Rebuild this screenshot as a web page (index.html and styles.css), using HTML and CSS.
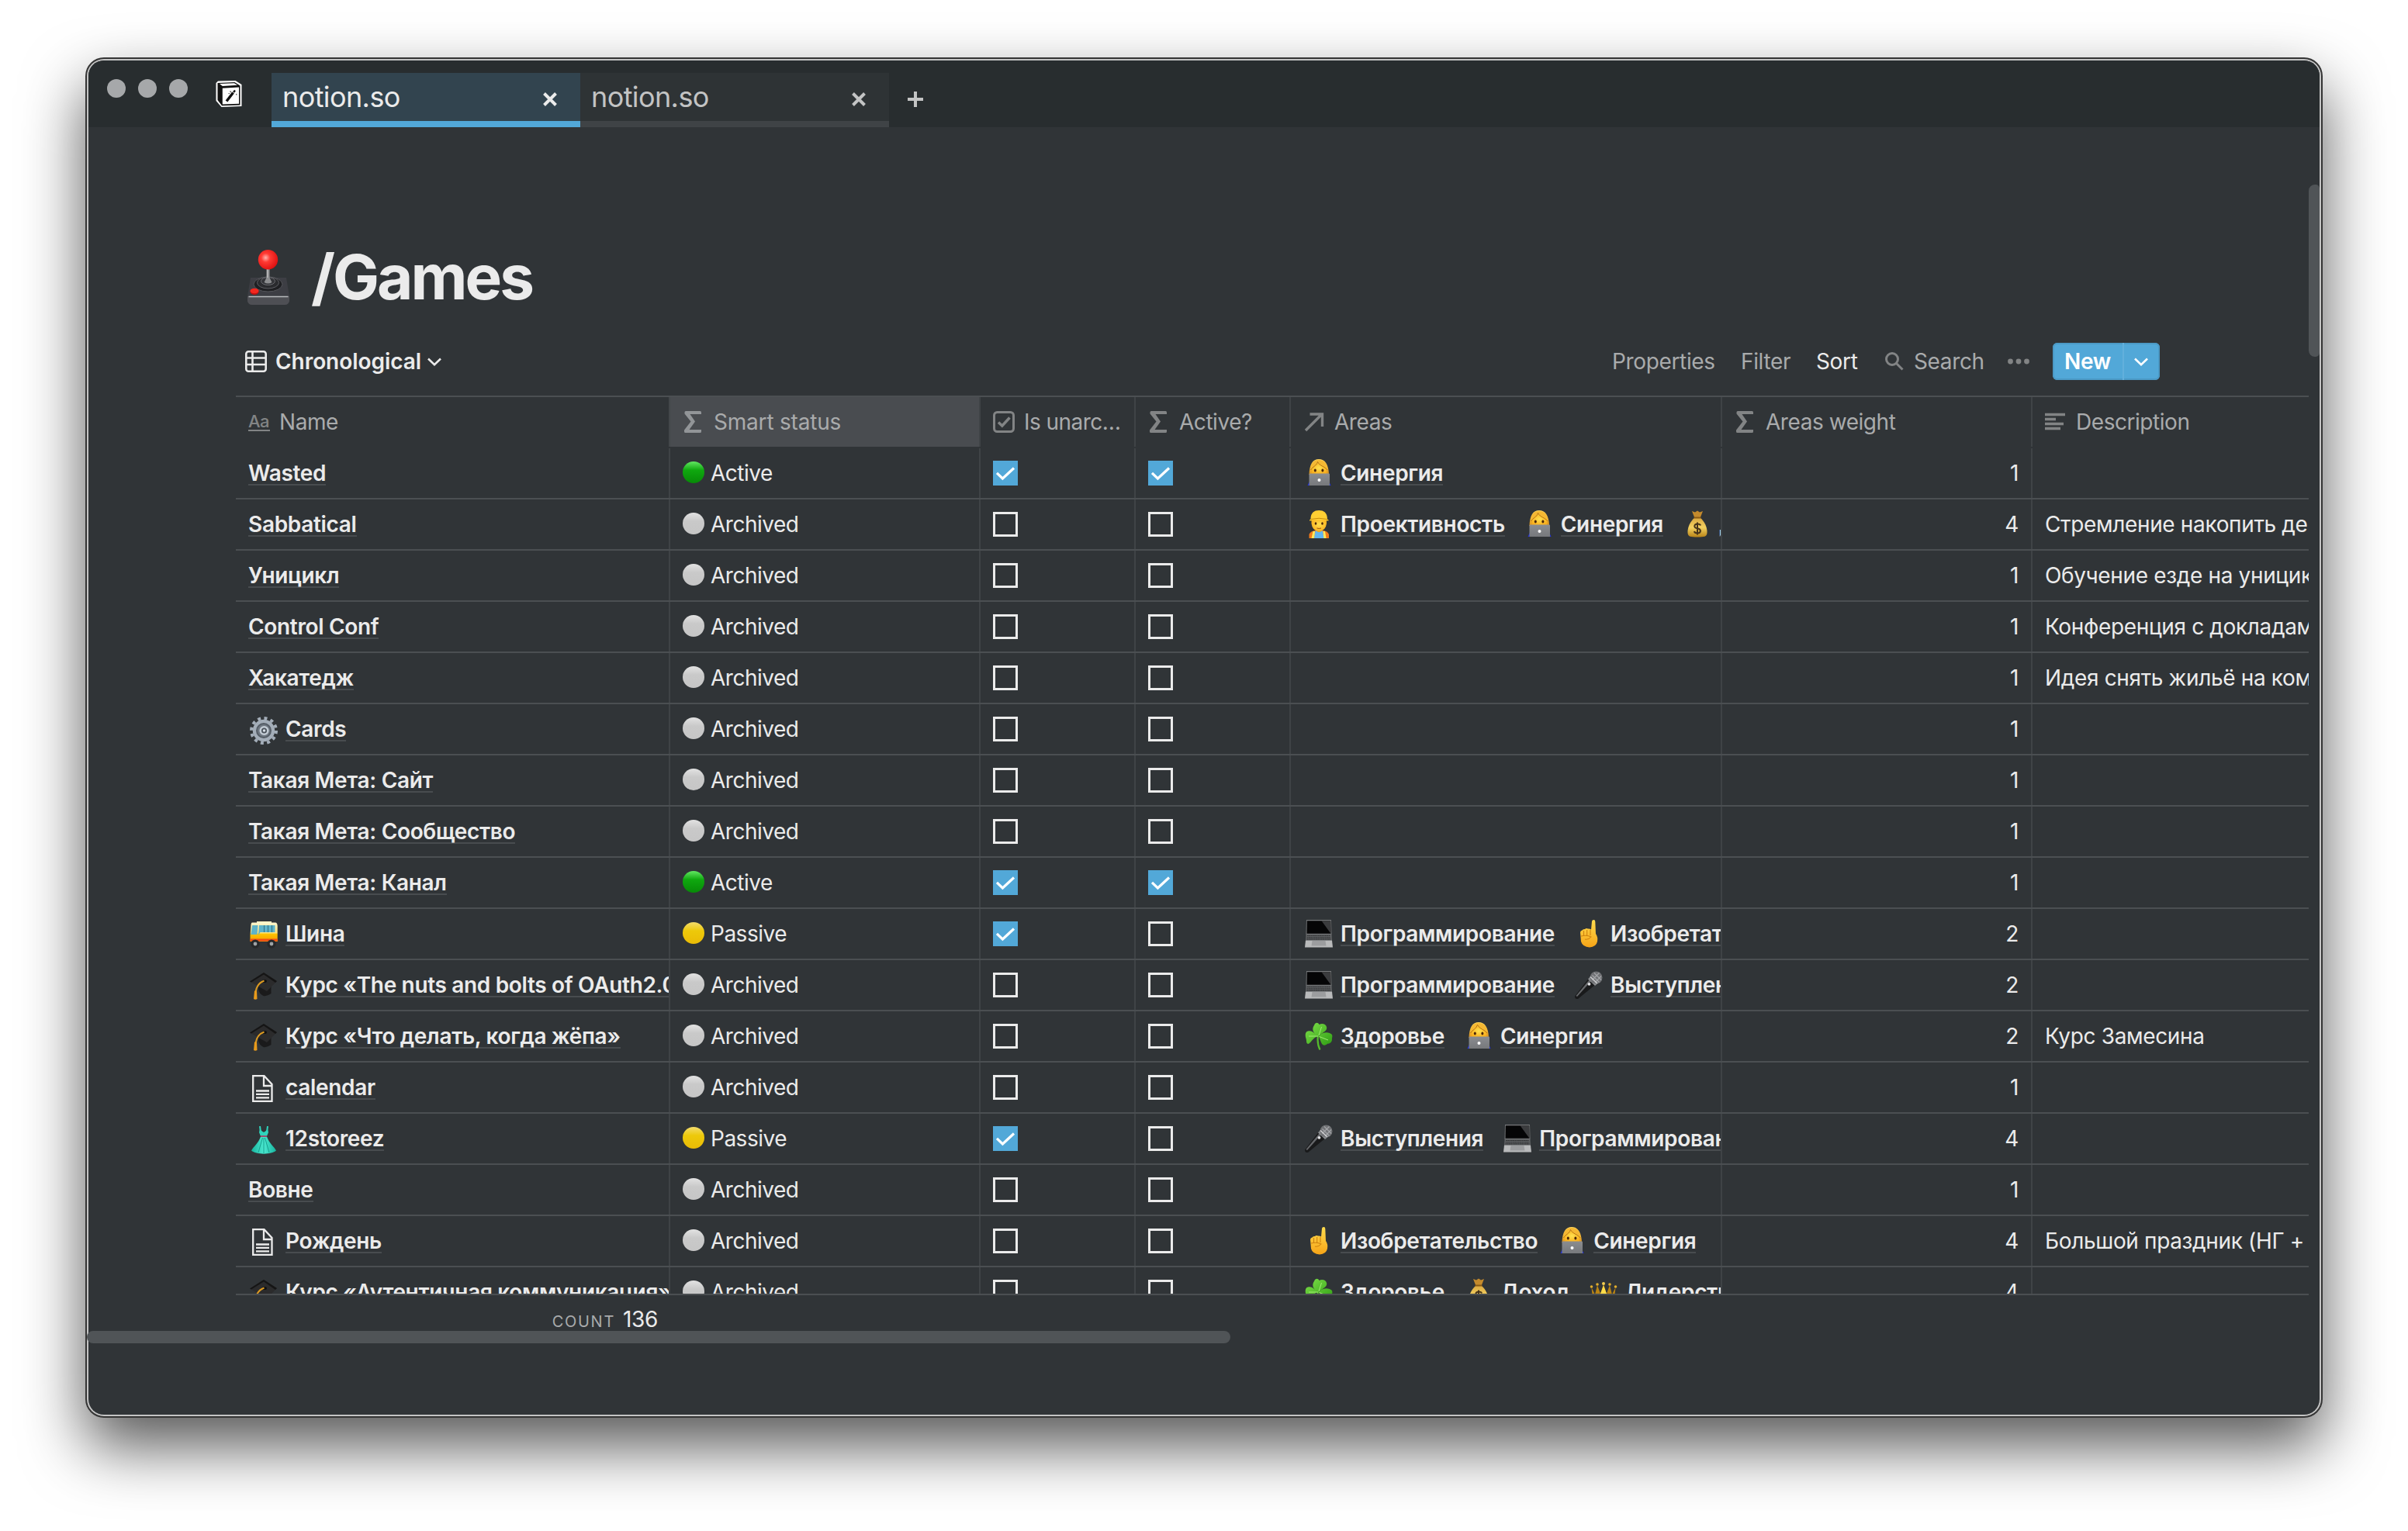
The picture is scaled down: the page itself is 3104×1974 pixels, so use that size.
FILE: index.html
```html
<!DOCTYPE html>
<html lang="ru">
<head>
<meta charset="utf-8">
<title>/Games</title>
<link rel="stylesheet" href="styles.css">
</head>
<body>
<svg class="defs" aria-hidden="true">
  <defs>
    <linearGradient id="g-hair" x1="0" y1="0" x2="0" y2="1"><stop offset="0" stop-color="#ffd65c"/><stop offset="1" stop-color="#d98a12"/></linearGradient>
    <linearGradient id="g-grey" x1="0" y1="0" x2="0" y2="1"><stop offset="0" stop-color="#8a8c90"/><stop offset="1" stop-color="#77797c"/></linearGradient>
    <linearGradient id="g-leaf" x1="0" y1="0" x2="1" y2="1"><stop offset="0" stop-color="#7fe04a"/><stop offset="1" stop-color="#2f9e14"/></linearGradient>
    <linearGradient id="g-skin" x1="0" y1="0" x2="0" y2="1"><stop offset="0" stop-color="#ffdc4e"/><stop offset="1" stop-color="#f6a417"/></linearGradient>
    <linearGradient id="g-bag" x1="0" y1="0" x2="0" y2="1"><stop offset="0" stop-color="#d9a640"/><stop offset=".5" stop-color="#f3d160"/><stop offset="1" stop-color="#b98418"/></linearGradient>
    <linearGradient id="g-bus" x1="0" y1="0" x2="0" y2="1"><stop offset="0" stop-color="#fff6cf"/><stop offset=".55" stop-color="#ffe27a"/><stop offset=".6" stop-color="#ffc400"/><stop offset="1" stop-color="#f59b00"/></linearGradient>
    <linearGradient id="g-dress" x1="0" y1="0" x2="1" y2="0"><stop offset="0" stop-color="#16b39d"/><stop offset=".5" stop-color="#4be8d0"/><stop offset="1" stop-color="#16b39d"/></linearGradient>
    <radialGradient id="g-ball" cx=".38" cy=".4" r=".65"><stop offset="0" stop-color="#ffb3ad"/><stop offset=".35" stop-color="#ff3a33"/><stop offset="1" stop-color="#dd1010"/></radialGradient>
    <radialGradient id="g-face" cx=".5" cy=".4" r=".6"><stop offset="0" stop-color="#ffe04f"/><stop offset="1" stop-color="#f9ad1a"/></radialGradient>
  </defs>
  <symbol id="sigma" viewBox="0 0 22 28"><path d="M2 0H20.500Q22 0 22 1.500V4H7.500L14 13.500 6.500 24H22V26.500Q22 28 20.500 28H1.500Q0 28 0 26.500V24.500L8.500 13.500 .5 3.500V1.500Q.5 0 2 0Z"/></symbol>
  <symbol id="check" viewBox="0 0 32 32"><path d="M0 0H32V32H0Z" fill="#52a8d8"/><path d="M5 15.800 12.400 23 27 9.500" fill="none" stroke="#fff" stroke-width="3.200"/></symbol>
  <symbol id="box" viewBox="0 0 32 32"><path d="M1.500 1.500H30.500V30.500H1.500Z" fill="none" stroke="#ebebeb" stroke-width="3"/></symbol>
  <symbol id="page" viewBox="0 0 36 36"><path d="M4.200 1.200H18.500L28.500 12V33.800H4.200ZM18 1.500V14H28.500M8 20.500H25M8 24.900H25M8 29.300H25" fill="none" stroke="#ebebeb" stroke-width="2.300"/></symbol>
  <symbol id="woman" viewBox="0 0 36 36"><path d="M18 0C10 0 6 7 5.500 19.500L8 23H29L31 19.500C30.500 7 26 0 18 0Z" fill="url(#g-hair)"/><path d="M8.500 12C8.500 7 13 5 18 6 23 5 28 8 28 12V20H8.500Z" fill="url(#g-face)"/><path d="M7 14C10 9.500 15 9 16.500 3.500 19 9 26 9.500 29.500 14 29 5 24 1 18 1 12 1 7.500 5 7 14Z" fill="#f5b833"/><path d="M16.500 3.500C19 9 26 9.500 29 14M16.500 3.500C15 9 10 9.500 7.500 14" stroke="#b06c0d" stroke-width=".9" fill="none"/><ellipse cx="13.300" cy="14.500" rx="1.500" ry="2" fill="#4a2508"/><ellipse cx="22.900" cy="14.500" rx="1.500" ry="2" fill="#4a2508"/><path d="M3.500 34 6 28.500H31L33.500 34Z" fill="#2434e0"/><path d="M5.500 19.500Q5.500 18.500 6.500 18.500H31Q32 18.500 32 19.500V34H5.500Z" fill="url(#g-grey)"/><circle cx="18.500" cy="27" r="2" fill="#fff"/></symbol>
  <symbol id="worker" viewBox="0 0 36 36"><path d="M5.500 36V31Q7 27 13 26H24Q29.500 27 31 31V36Z" fill="#f27a1a"/><path d="M8.500 36 10.500 27H13L12.500 36ZM27.500 36 26 27H23.500L24 36Z" fill="#ffe95a"/><path d="M13.500 26.500H23L24.500 36H12Z" fill="#62b5ef"/><path d="M15 22H21.500V26.500Q18 30 15 26.500Z" fill="#eaa01a"/><path d="M8.500 12H28V17Q27 26 18.200 27.500 9.500 26 8.500 17Z" fill="url(#g-face)"/><ellipse cx="14" cy="17" rx="1.300" ry="1.800" fill="#4a2508"/><ellipse cx="22.500" cy="17" rx="1.300" ry="1.800" fill="#4a2508"/><path d="M15.500 23Q18.200 24 21 23" stroke="#a3540c" fill="none"/><path d="M7.500 11.500C7.500 3 12 0 18.200 0S29 3 29 11.500Q31 12 30.500 13.500 18 11.500 6 13.500 5.500 12 7.500 11.500Z" fill="#ffcf33"/><path d="M7.500 11.500Q18 9 29 11.500" stroke="#c78b0b" fill="none"/></symbol>
  <symbol id="bag" viewBox="0 0 36 36"><path d="M11 1 15 2.500 18 .5 21 2.500 25 1 21.500 10H14.500Z" fill="#c48a2c"/><path d="M14.500 9.500H21.500C27 14 31 22 30.500 29 30 34 27 34.500 18 34.500S6 34 5.500 29C5 22 9 14 14.500 9.500Z" fill="url(#g-bag)"/><path d="M13.500 9.500H22.500" stroke="#8a5a14" stroke-width="2"/><path d="M22 19.500Q21.500 17.500 18 17.500T14.300 20.500Q14.500 23 18 23.300T22 26.500Q21.500 29.500 18 29.500T14 27M18 15.500V31.500" fill="none" stroke="#46331a" stroke-width="2"/></symbol>
  <symbol id="crown" viewBox="0 -3 36 36"><path d="M2.500 9 7 18 10 6 14 17 18 5 22 17 26 6 29 18 33.500 9 31 32H5Z" fill="#b98414"/><path d="M13 20 18 6 23 20 20 31H16Z" fill="#ffdc4a"/><path d="M5 18 7 30M31 18 29 30" stroke="#efc23a" stroke-width="2.500"/><circle cx="2.500" cy="8" r="1.800" fill="#e0ac2c"/><circle cx="10" cy="5" r="1.800" fill="#e0ac2c"/><circle cx="18" cy="4" r="2" fill="#f3cc50"/><circle cx="26" cy="5" r="1.800" fill="#e0ac2c"/><circle cx="33.500" cy="8" r="1.800" fill="#e0ac2c"/></symbol>
  <symbol id="laptop" viewBox="0 0 36 36"><path d="M2 0H34L34.500 19H1.500Z" fill="#77797b"/><path d="M2.800 1.200H33.200L33.500 17.800H2.500Z" fill="#050506"/><path d="M21.500 1.200H33.200L33.500 17.800Z" fill="#3b3c3e"/><path d="M1.500 18.500H34.500L35 26.500H1Z" fill="#5f6163"/><path d="M3 20.500H33M2.700 22.700H33.300M2.500 24.900H33.500" stroke="#2d2e30" stroke-width="1.100" stroke-dasharray="1.800 .5"/><path d="M1 26.500H35L36 35.500H0Z" fill="#b9babb"/><path d="M9.500 27H26.500L27.500 33.500H8.500Z" fill="#9c9d9f"/></symbol>
  <symbol id="finger" viewBox="0 0 36 36"><path d="M22 2Q22.300 0 24.300 0T26.300 2.300L27 18Q30 22 29 28 27.500 35 19 35.500 10 35 8 28L7 16Q7.500 13.500 9.500 13.500 10.500 11.500 13 12 14.500 10.500 17 11.500 19 11 21 12.500Z" fill="url(#g-skin)"/><path d="M11.500 14V20M15.700 13V20M20 13V20M8 21Q16 19 21 22 17.500 26 13 25" stroke="#cf8310" stroke-width="1.100" fill="none"/></symbol>
  <symbol id="mic" viewBox="0 0 36 36"><path d="M0 32.500 17.500 10 26 18 4 36Q0 36.500 0 32.500Z" fill="#191a1b"/><path d="M1.500 32 18.500 11.500 20.500 13.500 3 33Z" fill="#66686b"/><path d="M17 10.500 21.500 5 31.500 14 26 19Z" fill="#8b8d90"/><circle cx="27.500" cy="8.500" r="8" fill="#707275"/><path d="M22.500 5.500 31.500 14.500M25 2.500 34 11.500M22.500 11.500 31.500 2.500M26 15 34 6.500" stroke="#a5a7aa" stroke-width="1.100"/><path d="M20 7.500 29 16" stroke="#cfd0d2" stroke-width="1.400"/><circle cx="18.500" cy="16.800" r="1.900" fill="#e3e4e6"/></symbol>
  <symbol id="clover" viewBox="0 0 36 36"><path d="M17 17Q15.500 28 19.500 35.500" stroke="#55bb2c" stroke-width="2.200" fill="none"/><path d="M17.500 18C8 13 10 7 12 4 13.500 0 17 0 18.500 3 22 1 27 2 28 6 29.500 11 23 13 17.500 18ZM17 18C9 20 7 30 3 27.500 1.500 26 2.500 24 1.500 21 0 17 .5 12 4 11.500 9 10 12 14 17 18ZM18 18C24 11 32 13 34.500 15.500 36.500 18 34.500 20 35 22.500 35 26 31 28.500 29.500 27.500 26 31 22.500 30 21 26Z" fill="url(#g-leaf)"/><path d="M18 17 21.500 6M17 18 5 18M18.500 18.500 30 23" stroke="#a9f27c" stroke-width=".9"/></symbol>
  <symbol id="gear" viewBox="0 0 36 36"><circle cx="18" cy="18" r="16" fill="none" stroke="#a3adb8" stroke-width="4" stroke-dasharray="4 4.378"/><circle cx="18" cy="18" r="11.700" fill="#6f7882" stroke="#a3adb8" stroke-width="5"/><circle cx="18" cy="18" r="9" fill="none" stroke="#555d66" stroke-width="2"/><circle cx="18.500" cy="18" r="4.800" fill="#4a525b" stroke="#c3ccd5" stroke-width="2.600"/><circle cx="18.500" cy="18" r="1.800" fill="#d5dde5"/></symbol>
  <symbol id="bus" viewBox="0 0 36 36"><path d="M9 0H28V2.500H9Z" fill="#fff3c4"/><path d="M3 1.500H33Q35.500 1.500 35.700 6V26H.5V18L1.500 5Q1.700 1.500 3 1.500Z" fill="url(#g-bus)"/><path d="M.5 22.500H35.700V25.500H.5Z" fill="#f04e16"/><path d="M3.200 5H10.500L9.500 17H1.300Z" fill="#5fb3c9"/><path d="M12 5H32.500V14H13.500L11 18Z" fill="#5fb3c9"/><path d="M18.500 5V14M23.500 5V14M28.500 5V14" stroke="#2f6f80"/><circle cx="7" cy="29" r="5.600" fill="#26282a"/><circle cx="28" cy="29" r="5.600" fill="#26282a"/><circle cx="7" cy="29" r="2.400" fill="#9fa3a6"/><circle cx="28" cy="29" r="2.400" fill="#9fa3a6"/></symbol>
  <symbol id="cap" viewBox="0 0 36 36"><path d="M11 13 27.500 15V27Q22 31 17.500 30 12 27 11 22Z" fill="#1a1a1b"/><path d="M18 0 35 11 22 24 0 11.500Z" fill="#2b2b2c"/><path d="M18 0 35 11 33 13 18 2.500 2 12.500 0 11.500Z" fill="#151515"/><ellipse cx="19" cy="11" rx="3" ry="2" fill="#111"/><path d="M18.500 10.500Q9 14 7.500 25" stroke="#dc9a22" stroke-width="2" fill="none"/><path d="M6 23.500H9L9.500 34Q7 35.500 5 34Z" fill="#e79a1c"/></symbol>
  <symbol id="dress" viewBox="0 0 36 36"><path d="M13 0 14 7.500 18 9 22 7.500 23 0" fill="none" stroke="#2fd3bc" stroke-width="2"/><path d="M13 4 18 8.500 23 4 24 8 22 13H14L12 8Z" fill="#2fd3bc"/><path d="M14 13.500H22C25 22 31 26 34 31.500 28 37 8 37 2 31.500 5 26 11 22 14 13.500Z" fill="url(#g-dress)"/><path d="M14 13H22" stroke="#a3456a" stroke-width="1.800"/><path d="M16.500 15 11 34M18 15V35.500M19.500 15 25 34" stroke="#139a88" stroke-width=".9"/></symbol>
</svg>

<div class="window">
  <header class="titlebar">
    <div class="lights"><i></i><i></i><i></i></div>
    <svg class="logo" viewBox="0 0 34 34"><path d="M3 .5 25.500 0 33.500 5V33L7.500 34 .5 26V3Z" fill="#fff"/><path d="M2.500 3 24.500 2 31.500 6.500V31.500L8 32.300 2.500 25Z" fill="#111"/><path d="M5 4 24 3.200 28 5.800 8.800 7Z" fill="#fff"/><path d="M8.800 9.800 30 8.600V29.800L8.800 30.600Z" fill="#fff"/><path d="M14 26.500 22.500 15.500" stroke="#111" stroke-width="3.400"/><path d="M23 15 25 12.500" stroke="#111" stroke-width="2.400"/><path d="M18.500 13.500 20 15M26.500 17 27 18.500M16.500 16.500H18" stroke="#555" stroke-width="1.200"/></svg>
    <nav class="tabs">
      <div class="tab active"><span>notion.so</span><svg viewBox="0 0 20 20"><path d="M2.500 2.500 17.500 17.500M17.500 2.500 2.500 17.500"/></svg></div>
      <div class="tab"><span>notion.so</span><svg viewBox="0 0 20 20"><path d="M2.500 2.500 17.500 17.500M17.500 2.500 2.500 17.500"/></svg></div>
    </nav>
    <svg class="plus" viewBox="0 0 20 20"><path d="M10 0V20M0 10H20"/></svg>
  </header>

  <main class="page">
    <h1 class="title">
      <svg class="joystick" viewBox="0 0 54 71"><path d="M4 36H50L54 60V66Q53 71 48 71H6Q1 71 0 66V60Z" fill="#3d3e44"/><path d="M0 60H54V66Q53 71 48 71H6Q1 71 0 66Z" fill="#4e4f54"/><path d="M1.500 60.500H52.500" stroke="#b9babd" stroke-width="1.600"/><ellipse cx="26.500" cy="44.500" rx="18.500" ry="9.500" fill="#1f2023" stroke="#55565b"/><ellipse cx="26.500" cy="42.500" rx="14" ry="7.500" fill="#2a2b2e" stroke="#5d5e63"/><ellipse cx="26.500" cy="40.500" rx="9" ry="5" fill="#333438" stroke="#6a6b70"/><path d="M24.500 23H28.500V36L31.500 42Q26.500 45 21.500 42L24.500 36Z" fill="#8d8e90"/><path d="M25.800 23V36" stroke="#d0d0d0"/><ellipse cx="9" cy="54" rx="5.500" ry="4" fill="#c41010"/><ellipse cx="9" cy="53" rx="5.500" ry="3.200" fill="#f4281f"/><circle cx="26.500" cy="12.800" r="12.700" fill="url(#g-ball)"/></svg>
      <span>/Games</span>
    </h1>

    <div class="toolbar">
      <div class="view">
        <svg class="view-icon" viewBox="0 0 28 28"><rect x="1.300" y="1.300" width="25.400" height="25.400" rx="3"/><path d="M1 9.500H27M1 18H27M9.500 1V27"/></svg>
        <span>Chronological</span>
        <svg class="chevron" viewBox="0 0 18 10"><path d="M1 1 9 8.700 17 1"/></svg>
      </div>
      <div class="actions">
        <span>Properties</span><span>Filter</span><span class="on">Sort</span>
        <span class="search"><svg viewBox="0 0 24 24"><circle cx="9" cy="9" r="7.500"/><path d="M14.500 14.500 22.500 22.500"/></svg>Search</span>
        <svg class="dots" viewBox="0 0 28 8"><circle cx="3.500" cy="4" r="3.400"/><circle cx="14" cy="4" r="3.400"/><circle cx="24.500" cy="4" r="3.400"/></svg>
        <div class="new"><span>New</span><b><svg class="chevron" viewBox="0 0 18 10"><path d="M1 1 9 8.700 17 1"/></svg></b></div>
      </div>
    </div>

    <section class="table">
      <div class="head row">
        <div><b class="aa">Aa</b>Name</div>
        <div class="hover"><svg class="sig"><use href="#sigma"/></svg>Smart status</div>
        <div><svg class="hicon" viewBox="0 0 28 28"><rect x="1.500" y="1.500" width="25" height="25" rx="4" fill="none" stroke="#828485" stroke-width="3"/><path d="M7 14.500 11.800 19 21.500 8.500" fill="none" stroke="#828485" stroke-width="3.400"/></svg><span class="tight">Is unarc…</span></div>
        <div><svg class="sig"><use href="#sigma"/></svg>Active?</div>
        <div><svg class="hicon" viewBox="0 0 28 28"><path d="M3 25 23.500 4.500M8.500 4H24.500V20" fill="none" stroke="#828485" stroke-width="3.400"/></svg>Areas</div>
        <div><svg class="sig"><use href="#sigma"/></svg>Areas weight</div>
        <div><svg class="hicon" viewBox="0 0 28 28"><path d="M0 4.500H26M0 10.500H14M0 16.500H24M0 22.500H20" stroke="#828485" stroke-width="3.700"/></svg>Description</div>
      </div>
      <div class="body">
        <div class="row"><div><a>Wasted</a></div><div><i class="dot green"></i>Active</div><div><svg class="cb"><use href="#check"/></svg></div><div><svg class="cb"><use href="#check"/></svg></div><div><svg class="em"><use href="#woman"/></svg><a>Синергия</a></div><div>1</div><div></div></div>
        <div class="row"><div><a>Sabbatical</a></div><div><i class="dot"></i>Archived</div><div><svg class="cb"><use href="#box"/></svg></div><div><svg class="cb"><use href="#box"/></svg></div><div><svg class="em"><use href="#worker"/></svg><a>Проективность</a><svg class="em"><use href="#woman"/></svg><a>Синергия</a><svg class="em"><use href="#bag"/></svg><a>Доход</a></div><div>4</div><div>Стремление накопить деньги</div></div>
        <div class="row"><div><a>Уницикл</a></div><div><i class="dot"></i>Archived</div><div><svg class="cb"><use href="#box"/></svg></div><div><svg class="cb"><use href="#box"/></svg></div><div></div><div>1</div><div>Обучение езде на уницикле</div></div>
        <div class="row"><div><a>Control Conf</a></div><div><i class="dot"></i>Archived</div><div><svg class="cb"><use href="#box"/></svg></div><div><svg class="cb"><use href="#box"/></svg></div><div></div><div>1</div><div>Конференция с докладами</div></div>
        <div class="row"><div><a>Хакатедж</a></div><div><i class="dot"></i>Archived</div><div><svg class="cb"><use href="#box"/></svg></div><div><svg class="cb"><use href="#box"/></svg></div><div></div><div>1</div><div>Идея снять жильё на компанию</div></div>
        <div class="row"><div><svg class="em"><use href="#gear"/></svg><a>Cards</a></div><div><i class="dot"></i>Archived</div><div><svg class="cb"><use href="#box"/></svg></div><div><svg class="cb"><use href="#box"/></svg></div><div></div><div>1</div><div></div></div>
        <div class="row"><div><a>Такая Мета: Сайт</a></div><div><i class="dot"></i>Archived</div><div><svg class="cb"><use href="#box"/></svg></div><div><svg class="cb"><use href="#box"/></svg></div><div></div><div>1</div><div></div></div>
        <div class="row"><div><a>Такая Мета: Сообщество</a></div><div><i class="dot"></i>Archived</div><div><svg class="cb"><use href="#box"/></svg></div><div><svg class="cb"><use href="#box"/></svg></div><div></div><div>1</div><div></div></div>
        <div class="row"><div><a>Такая Мета: Канал</a></div><div><i class="dot green"></i>Active</div><div><svg class="cb"><use href="#check"/></svg></div><div><svg class="cb"><use href="#check"/></svg></div><div></div><div>1</div><div></div></div>
        <div class="row"><div><svg class="em"><use href="#bus"/></svg><a>Шина</a></div><div><i class="dot yellow"></i>Passive</div><div><svg class="cb"><use href="#check"/></svg></div><div><svg class="cb"><use href="#box"/></svg></div><div><svg class="em"><use href="#laptop"/></svg><a>Программирование</a><svg class="em"><use href="#finger"/></svg><a>Изобретательство</a></div><div>2</div><div></div></div>
        <div class="row"><div><svg class="em"><use href="#cap"/></svg><a>Курс «The nuts and bolts of OAuth2.0»</a></div><div><i class="dot"></i>Archived</div><div><svg class="cb"><use href="#box"/></svg></div><div><svg class="cb"><use href="#box"/></svg></div><div><svg class="em"><use href="#laptop"/></svg><a>Программирование</a><svg class="em"><use href="#mic"/></svg><a>Выступления</a></div><div>2</div><div></div></div>
        <div class="row"><div><svg class="em"><use href="#cap"/></svg><a>Курс «Что делать, когда жёпа»</a></div><div><i class="dot"></i>Archived</div><div><svg class="cb"><use href="#box"/></svg></div><div><svg class="cb"><use href="#box"/></svg></div><div><svg class="em"><use href="#clover"/></svg><a>Здоровье</a><svg class="em"><use href="#woman"/></svg><a>Синергия</a></div><div>2</div><div>Курс Замесина</div></div>
        <div class="row"><div><svg class="em"><use href="#page"/></svg><a>calendar</a></div><div><i class="dot"></i>Archived</div><div><svg class="cb"><use href="#box"/></svg></div><div><svg class="cb"><use href="#box"/></svg></div><div></div><div>1</div><div></div></div>
        <div class="row"><div><svg class="em"><use href="#dress"/></svg><a>12storeez</a></div><div><i class="dot yellow"></i>Passive</div><div><svg class="cb"><use href="#check"/></svg></div><div><svg class="cb"><use href="#box"/></svg></div><div><svg class="em"><use href="#mic"/></svg><a>Выступления</a><svg class="em"><use href="#laptop"/></svg><a>Программирование</a></div><div>4</div><div></div></div>
        <div class="row"><div><a>Вовне</a></div><div><i class="dot"></i>Archived</div><div><svg class="cb"><use href="#box"/></svg></div><div><svg class="cb"><use href="#box"/></svg></div><div></div><div>1</div><div></div></div>
        <div class="row"><div><svg class="em"><use href="#page"/></svg><a>Рождень</a></div><div><i class="dot"></i>Archived</div><div><svg class="cb"><use href="#box"/></svg></div><div><svg class="cb"><use href="#box"/></svg></div><div><svg class="em"><use href="#finger"/></svg><a>Изобретательство</a><svg class="em"><use href="#woman"/></svg><a>Синергия</a></div><div>4</div><div>Большой праздник (НГ +</div></div>
        <div class="row"><div><svg class="em"><use href="#cap"/></svg><a>Курс «Аутентичная коммуникация»</a></div><div><i class="dot"></i>Archived</div><div><svg class="cb"><use href="#box"/></svg></div><div><svg class="cb"><use href="#box"/></svg></div><div><svg class="em"><use href="#clover"/></svg><a>Здоровье</a><svg class="em"><use href="#bag"/></svg><a>Доход</a><svg class="em"><use href="#crown"/></svg><a>Лидерство</a></div><div>4</div><div></div></div>
      </div>
      <footer class="foot"><span class="label">COUNT</span><span>136</span></footer>
    </section>
    <div class="hscroll"></div>
  </main>
  <div class="vscroll"></div>
</div>
</body>
</html>
```
FILE: styles.css
```css
* { box-sizing: border-box; }
html, body { margin: 0; background: #fff; }
body {
  width: 3104px;
  height: 1974px;
  padding: 78px 0 0 114px;
  overflow: hidden;
  font: 400 28px/32px Inter, "Noto Sans", sans-serif;
  letter-spacing: -0.35px;
  color: #ebebeb;
}
svg { display: block; flex: none; }
.defs { position: absolute; width: 0; height: 0; }

.window {
  position: relative;
  width: 2876px;
  height: 1746px;
  border-radius: 20px;
  background: #303437;
  box-shadow: 0 0 0 2px #c4c4c4, 0 0 0 4px #343434, 0 37px 80px 4px rgba(0, 0, 0, .66);
}

.titlebar {
  display: flex;
  height: 86px;
  border-radius: 20px 20px 0 0;
  background: #282d2f;
}
.lights { display: flex; gap: 16px; padding: 24px 0 0 24px; }
.lights i { width: 24px; height: 24px; border-radius: 50%; background: #a6a8aa; }
.logo { width: 34px; height: 34px; margin: 26px 38px 0 36px; }
.tabs { display: flex; padding-top: 16px; }
.tab {
  display: flex;
  align-items: center;
  justify-content: space-between;
  width: 398px;
  height: 70px;
  padding: 0 29px 0 14px;
  border-bottom: 8px solid #3f4346;
  background: #2e3335;
  font-size: 36px;
  letter-spacing: -0.6px;
  color: #c3c4c4;
}
.tab.active { background: #32444f; border-color: #52a8d8; color: #ebebeb; }
.tab svg { width: 20px; height: 20px; margin-top: 5px; fill: none; stroke: currentColor; stroke-width: 4; }
.plus { width: 20px; height: 20px; margin: 40px 0 0 24px; fill: none; stroke: #c3c4c4; stroke-width: 4; }

.page { height: 1660px; padding: 136px 14px 0 190px; }
.title {
  display: flex;
  align-items: center;
  gap: 28px;
  height: 114px;
  margin: 0;
  padding-left: 15px;
  font: 700 80px/114px Inter, sans-serif;
  letter-spacing: -3px;
}
.joystick { width: 54px; height: 71px; }

.toolbar { display: flex; justify-content: space-between; align-items: center; height: 96px; padding: 8px 192px 0 12px; }
.view { display: flex; align-items: center; font-weight: 600; letter-spacing: -0.05px; }
.view-icon { width: 28px; height: 28px; margin-right: 11px; fill: none; stroke: #ebebeb; stroke-width: 2.6; }
.chevron { width: 18px; height: 11px; fill: none; stroke: currentColor; stroke-width: 2.6; }
.view .chevron { margin-left: 8px; }
.actions {
  display: grid;
  grid-template-columns: 166px 98px 88px 158px 58px 138px;
  align-items: center;
  color: #a9abac;
}
.actions .on { margin-left: -1px; color: #ebebeb; }
.search { display: flex; align-items: center; }
.search svg { width: 24px; height: 24px; margin-right: 13px; fill: none; stroke: #828485; stroke-width: 3; }
.dots { width: 28px; height: 8px; fill: #828485; }
.new {
  display: flex;
  height: 48px;
  border-radius: 6px;
  overflow: hidden;
  background: #52a8d8;
  box-shadow: inset 0 0 0 2px #4b99c5;
  color: #fff;
  font-weight: 600;
  line-height: 48px;
}
.new span { width: 90px; padding-left: 15px; }
.new b { display: flex; align-items: center; flex: 1; padding-left: 13px; border-left: 2px solid #62b0dc; }

.table { height: 1206px; border-top: 2px solid #4b4f52; overflow: hidden; }
.row {
  display: grid;
  grid-template-columns: 560px 400px 200px 200px 556px 400px 356px;
  height: 66px;
  border-bottom: 2px solid #4b4f52;
}
.row > div {
  display: flex;
  align-items: center;
  padding-left: 16px;
  border-right: 2px solid #3f4346;
  overflow: hidden;
  white-space: nowrap;
}
.row > div:last-child { border-right: 0; }
.head { border-color: transparent; color: #a9abac; letter-spacing: -0.45px; }
.head > div:first-child { border-right-color: #43474a; }
.head .hover { background: #494c50; letter-spacing: -0.2px; }
.sig { width: 22px; height: 28px; margin: 0 16px 0 2px; fill: #828485; }
.hover .sig { fill: #929598; }
.hicon { width: 28px; height: 28px; margin-right: 12px; }
.tight { letter-spacing: -0.55px; }
.aa {
  width: 28px;
  height: 24px;
  margin: 0 12px 0 0;
  border-bottom: 2.5px solid #828485;
  color: #828485;
  font-size: 22px;
  font-weight: 500;
  line-height: 22px;
  letter-spacing: -0.6px;
}

.body { height: 1090px; overflow: hidden; }
.body .row > div:nth-child(2) { letter-spacing: -0.5px; }
.body .row > div:nth-child(6) { justify-content: flex-end; padding-right: 16px; }
.row a {
  font-weight: 600;
  letter-spacing: -0.33px;
  line-height: 32px;
  box-shadow: inset 0 -2px #484c4f;
}
.dot {
  flex: none;
  width: 28px;
  height: 28px;
  margin: -2px 8px 0 0;
  border-radius: 50%;
  background: linear-gradient(#e2e2e2, #c9c9c9 40%, #c6c6c6);
}
.dot.green { background: linear-gradient(#62e862, #0fa80f 40%, #078a07); }
.dot.yellow { background: linear-gradient(#f3dc6c, #edc90a 40%, #eabb06); }
.cb { width: 32px; height: 32px; }
.em { width: 36px; height: 36px; margin: 0 10px 0 2px; }
.row > div:first-child .em { margin-top: 3px; }
a + .em { margin-left: 26px; }

.foot {
  display: flex;
  justify-content: flex-end;
  align-items: baseline;
  gap: 10px;
  height: 46px;
  margin-top: 2px;
  padding: 14px 2128px 0 0;
  box-shadow: 0 -2px #4b4f52;
  line-height: 34px;
}
.foot .label { font-size: 20px; letter-spacing: 1.7px; color: #a9abac; }

.hscroll { width: 1474px; height: 16px; margin-left: -192px; border-radius: 8px; background: #505457; }
.vscroll { position: absolute; right: 0; top: 160px; width: 14px; height: 222px; border-radius: 8px 5px 5px 8px; background: #505457; }
```
